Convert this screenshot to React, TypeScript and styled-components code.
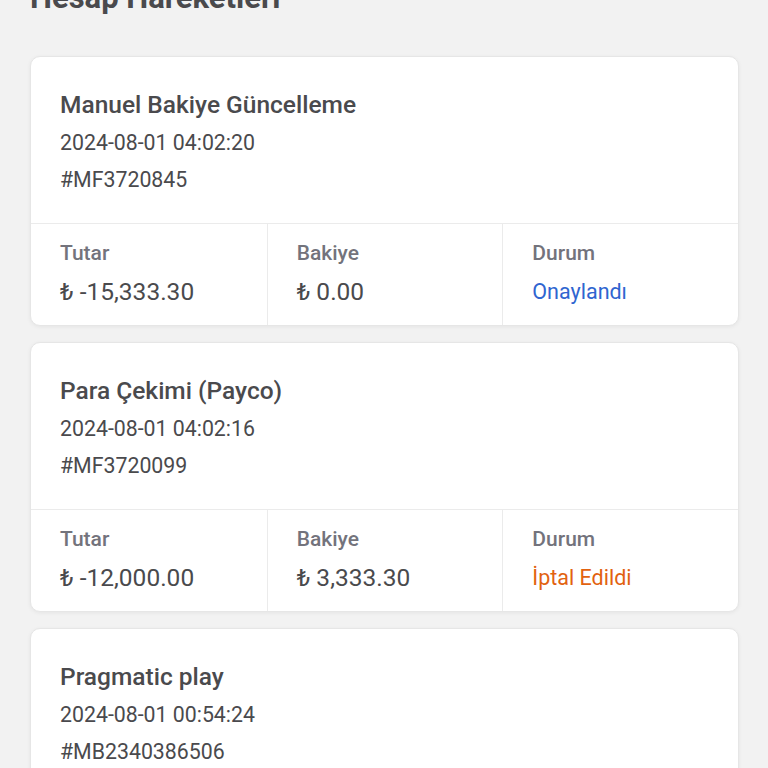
import React from "react";
import styled, { createGlobalStyle } from "styled-components";

const GlobalStyle = createGlobalStyle`
    html, body {
        margin: 0;
        padding: 0;
        background: #f2f2f2;
        font-family: Roboto, "Liberation Sans", sans-serif;
        overflow: hidden;
    }
`;

const Page = styled.div`
    width: 768px;
    box-sizing: border-box;
    padding: 0 29px 0 30px;
    display: flex;
    flex-direction: column;
`;

const PageTitle = styled.h1`
    margin: -22px 0 0 0;
    height: 40px;
    line-height: 40px;
    font-size: 31px;
    font-weight: 700;
    color: #4a4a4d;
`;

const List = styled.div`
    margin-top: 38px;
    display: flex;
    flex-direction: column;
    gap: 16px;
`;

const Card = styled.div`
    background: #ffffff;
    border: 1px solid #e6e6e6;
    border-radius: 10px;
    box-shadow: 0 1px 4px rgba(0, 0, 0, 0.06);
    overflow: hidden;
`;

const CardHead = styled.div`
    padding: 32px 30px 24px 29px;
    display: flex;
    flex-direction: column;
    border-bottom: 1px solid #ebebeb;
`;

const CardTitle = styled.div`
    font-size: 24.5px;
    font-weight: 500;
    line-height: 32px;
    color: #4a4a4d;
`;

const Meta = styled.div<{ tall?: boolean }>`
    font-size: 21.3px;
    font-weight: 400;
    line-height: ${p => p.tall ? 38 : 36}px;
    margin-top: ${p => p.tall ? 0 : 4}px;
    color: #4a4a4d;
`;

const Stats = styled.div`
    display: grid;
    grid-template-columns: 1fr 1fr 1fr;
`;

const Stat = styled.div`
    padding: 15px 29px 17px 29px;
    display: flex;
    flex-direction: column;
    & + & {
        border-left: 1px solid #ebebeb;
    }
`;

const StatLabel = styled.div`
    font-size: 21px;
    font-weight: 500;
    line-height: 28px;
    color: #73737c;
`;

const StatValue = styled.div<{ tone?: "ok" | "cancel" }>`
    margin-top: 9px;
    line-height: 32px;
    font-size: ${p => p.tone ? 21.5 : 24.5}px;
    font-weight: 400;
    color: ${p => p.tone === "ok" ? "#2f65d0" : p.tone === "cancel" ? "#e2620f" : "#4a4a4d"};
`;

interface Tx {
    title: string;
    date: string;
    id: string;
    amount?: string;
    balance?: string;
    status?: string;
    tone?: "ok" | "cancel";
}

const transactions: Tx[] = [
    {
        title: "Manuel Bakiye Güncelleme",
        date: "2024-08-01 04:02:20",
        id: "#MF3720845",
        amount: "₺ -15,333.30",
        balance: "₺ 0.00",
        status: "Onaylandı",
        tone: "ok",
    },
    {
        title: "Para Çekimi (Payco)",
        date: "2024-08-01 04:02:16",
        id: "#MF3720099",
        amount: "₺ -12,000.00",
        balance: "₺ 3,333.30",
        status: "İptal Edildi",
        tone: "cancel",
    },
    {
        title: "Pragmatic play",
        date: "2024-08-01 00:54:24",
        id: "#MB2340386506",
        amount: "₺ -500.00",
        balance: "₺ 15,333.30",
        status: "Onaylandı",
        tone: "ok",
    },
];

function TxCard({ tx }: { tx: Tx }) {
    return (
        <Card>
            <CardHead>
                <CardTitle>{tx.title}</CardTitle>
                <Meta>{tx.date}</Meta>
                <Meta tall>{tx.id}</Meta>
            </CardHead>
            <Stats>
                <Stat>
                    <StatLabel>Tutar</StatLabel>
                    <StatValue>{tx.amount}</StatValue>
                </Stat>
                <Stat>
                    <StatLabel>Bakiye</StatLabel>
                    <StatValue>{tx.balance}</StatValue>
                </Stat>
                <Stat>
                    <StatLabel>Durum</StatLabel>
                    <StatValue tone={tx.tone}>{tx.status}</StatValue>
                </Stat>
            </Stats>
        </Card>
    );
}

export default function App() {
    return (
        <Page>
            <GlobalStyle />
            <PageTitle>Hesap Hareketleri</PageTitle>
            <List>
                {transactions.map(tx => <TxCard key={tx.id} tx={tx} />)}
            </List>
        </Page>
    );
}
